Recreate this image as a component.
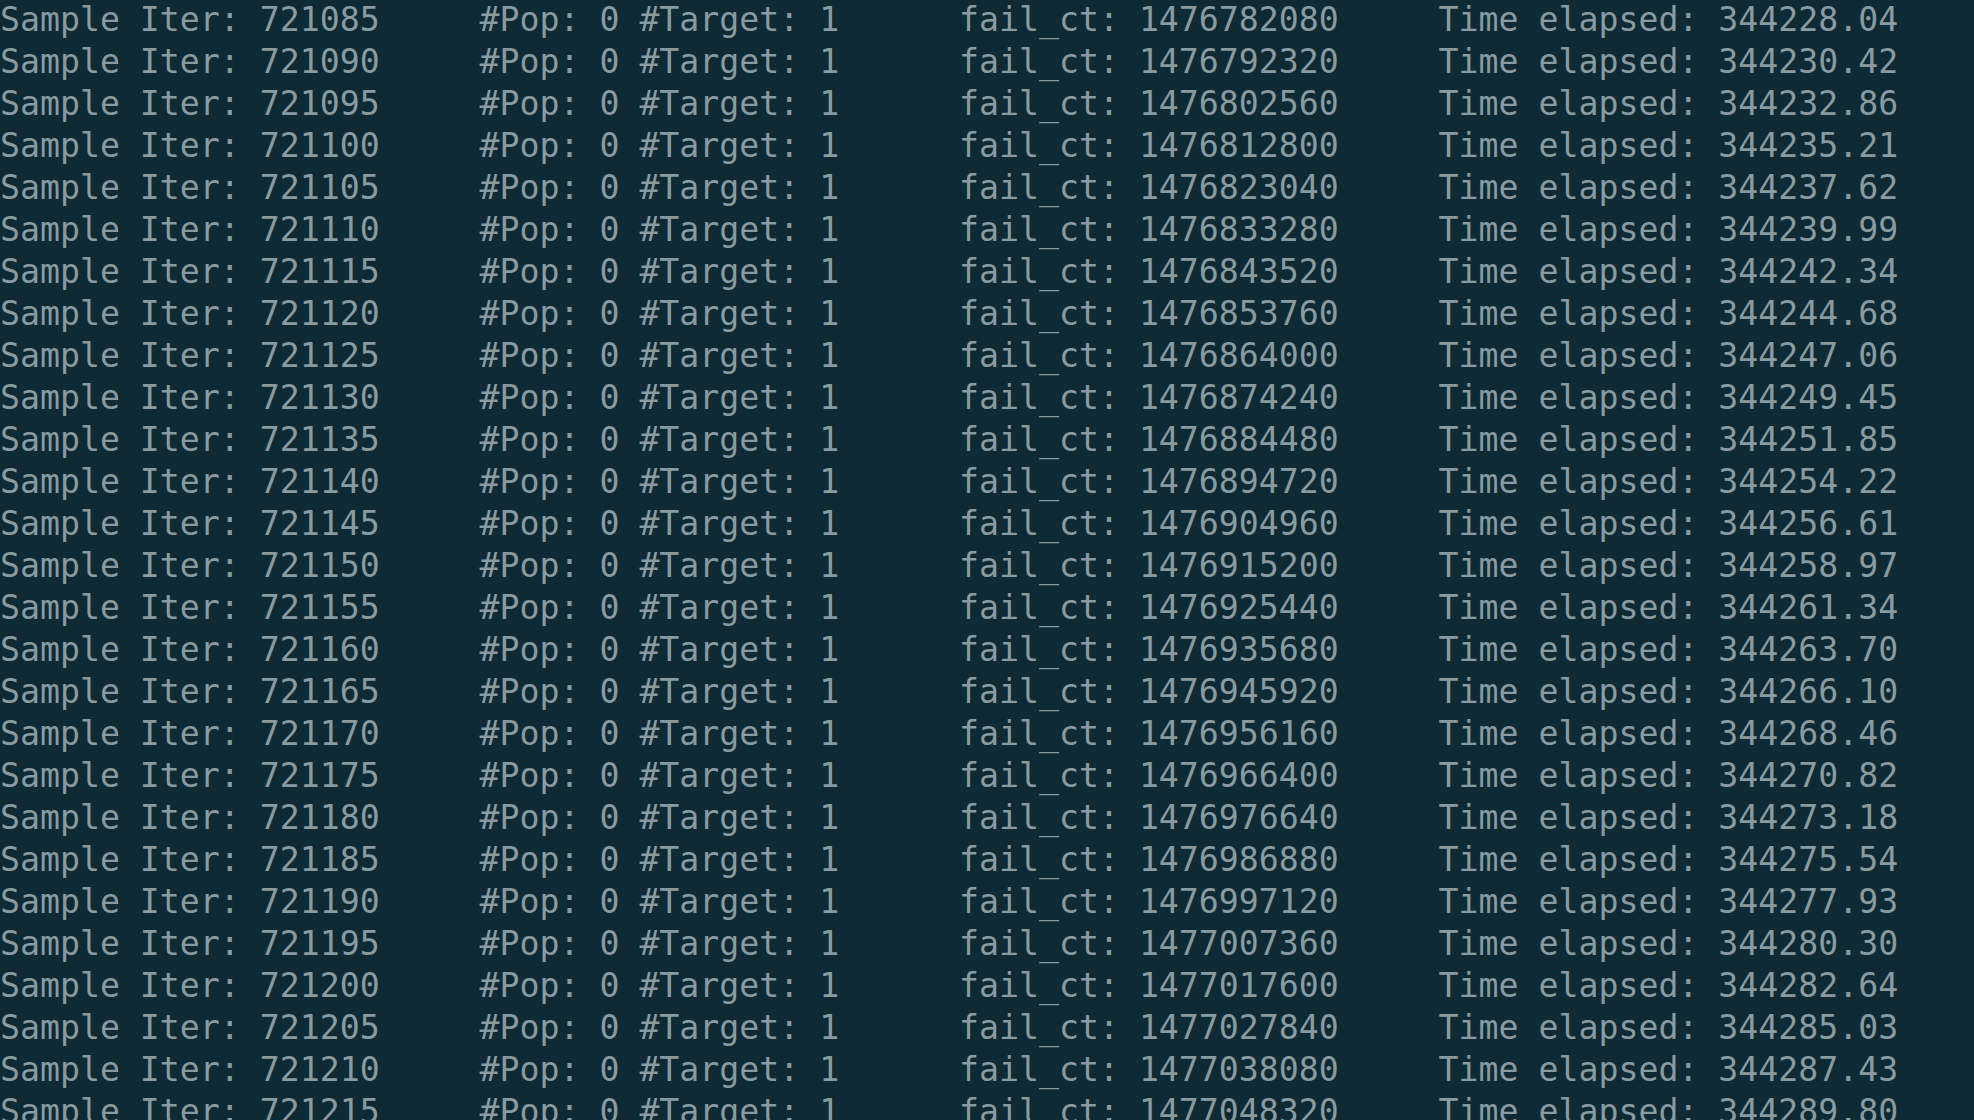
import React from "react";

const times = [
  "344228.04", "344230.42", "344232.86", "344235.21", "344237.62", "344239.99",
  "344242.34", "344244.68", "344247.06", "344249.45", "344251.85", "344254.22",
  "344256.61", "344258.97", "344261.34", "344263.70", "344266.10", "344268.46",
  "344270.82", "344273.18", "344275.54", "344277.93", "344280.30", "344282.64",
  "344285.03", "344287.43", "344289.80",
];

export default function App() {
  const lines = times.map((t, k) => {
    const iter = 721085 + 5 * k;
    const fc = 1476782080 + 10240 * k;
    return `Sample Iter: ${iter}     #Pop: 0 #Target: 1      fail_ct: ${fc}     Time elapsed: ${t}`;
  });
  return (
    <div className="h-[1120px] w-full overflow-hidden bg-[#0d2a35]">
      <div
        className="text-[33.2px] leading-[42px] text-[#8a9b9f] whitespace-pre -mt-[1px]"
        style={{ fontFamily: '"DejaVu Sans Mono", monospace' }}
      >
        {lines.map((l, i) => (
          <div key={i}>{l}</div>
        ))}
      </div>
    </div>
  );
}
